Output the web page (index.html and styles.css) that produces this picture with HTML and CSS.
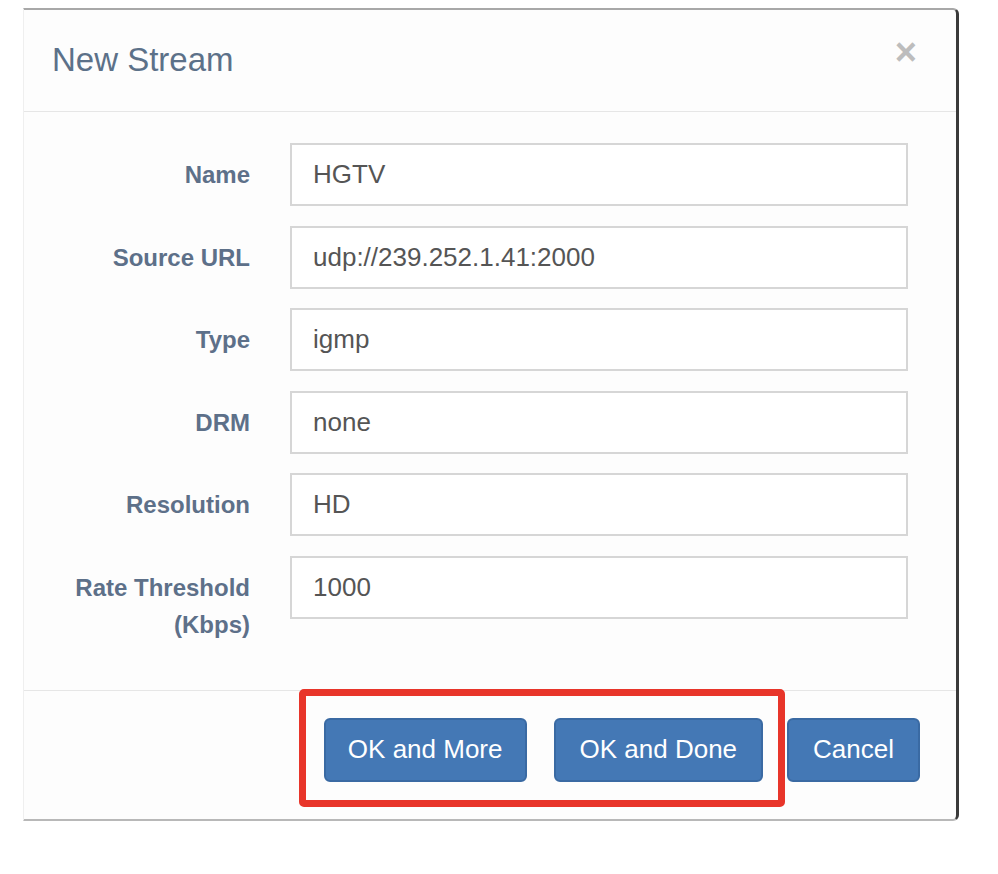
FILE: index.html
```html
<!DOCTYPE html>
<html lang="en">
<head>
    <meta charset="UTF-8">
    <meta name="viewport" content="width=device-width, initial-scale=1.0">
    <title>New Stream</title>
    <link rel="stylesheet" href="styles.css">
</head>
<body>
    <div class="modal">
        <div class="modal-header">
            <h4 class="modal-title">New Stream</h4>
            <button class="close" type="button">&times;</button>
        </div>
        <form class="modal-body">
            <div class="form-row">
                <label for="name">Name</label>
                <input id="name" type="text" value="HGTV" readonly>
            </div>
            <div class="form-row">
                <label for="source">Source URL</label>
                <input id="source" type="text" value="udp://239.252.1.41:2000" readonly>
            </div>
            <div class="form-row">
                <label for="type">Type</label>
                <input id="type" type="text" value="igmp" readonly>
            </div>
            <div class="form-row">
                <label for="drm">DRM</label>
                <input id="drm" type="text" value="none" readonly>
            </div>
            <div class="form-row">
                <label for="resolution">Resolution</label>
                <input id="resolution" type="text" value="HD" readonly>
            </div>
            <div class="form-row">
                <label for="rate">Rate Threshold (Kbps)</label>
                <input id="rate" type="text" value="1000" readonly>
            </div>
        </form>
        <div class="modal-footer">
            <button class="btn btn-more" type="button">OK and More</button>
            <button class="btn" type="button">OK and Done</button>
            <button class="btn" type="button">Cancel</button>
            <div class="highlight"></div>
        </div>
    </div>
</body>
</html>
```

FILE: styles.css
```css
body {
    margin: 0;
    padding: 8px 0 0 23px;
    background: #fff;
    font-family: 'Liberation Sans', Arial, sans-serif;
}

.modal {
    width: 932px;
    background: #fdfdfd;
    border-top: 2px solid #a8a8a8;
    border-right: 3px solid #3a3a3a;
    border-bottom: 2px solid #b8b8b8;
    border-left: 1px solid #efefef;
    border-radius: 0 6px 6px 0;
}

.modal-header {
    display: flex;
    justify-content: space-between;
    align-items: flex-start;
    height: 71px;
    padding: 30px 39px 0 28px;
    border-bottom: 1px solid #e6e6e6;
}

.modal-title {
    margin: 0;
    font-size: 33px;
    font-weight: normal;
    line-height: 40px;
    color: #5c7189;
}

.close {
    margin-top: -7px;
    padding: 0;
    border: none;
    background: none;
    font-family: 'Liberation Sans', Arial, sans-serif;
    font-size: 38px;
    font-weight: bold;
    line-height: 1;
    color: #bdbdbd;
    cursor: pointer;
}

.modal-body {
    display: flex;
    flex-direction: column;
    gap: 19.6px;
    margin: 0;
    padding: 31px 48px 47px 0;
}

.form-row {
    display: grid;
    grid-template-columns: 226px 618px;
    column-gap: 40px;
    align-items: start;
}

.form-row label {
    padding-top: 13px;
    text-align: right;
    font-size: 24px;
    font-weight: bold;
    line-height: 37px;
    color: #5d7089;
}

.form-row input {
    box-sizing: border-box;
    width: 618px;
    height: 63px;
    margin: 0;
    padding: 0 0 0 21px;
    border: 2px solid #d6d6d6;
    background: #fff;
    font-family: 'Liberation Sans', Arial, sans-serif;
    font-size: 26px;
    color: #555;
    outline: none;
}

.modal-footer {
    position: relative;
    display: flex;
    justify-content: flex-end;
    gap: 24px;
    padding: 27px 36px 37px 0;
    border-top: 1px solid #e6e6e6;
}

.btn {
    height: 64px;
    padding: 0 24px;
    border: 2px solid #3a6aa3;
    border-radius: 6px;
    background: #4478b5;
    color: #fff;
    font-family: 'Liberation Sans', Arial, sans-serif;
    font-size: 26px;
    cursor: pointer;
}

.btn-more {
    padding: 0 22px;
    margin-right: 3px;
}

.highlight {
    position: absolute;
    top: -2px;
    left: 275px;
    box-sizing: border-box;
    width: 486px;
    height: 118px;
    border: 7px solid #e8352a;
    border-radius: 5px;
    pointer-events: none;
}
```
